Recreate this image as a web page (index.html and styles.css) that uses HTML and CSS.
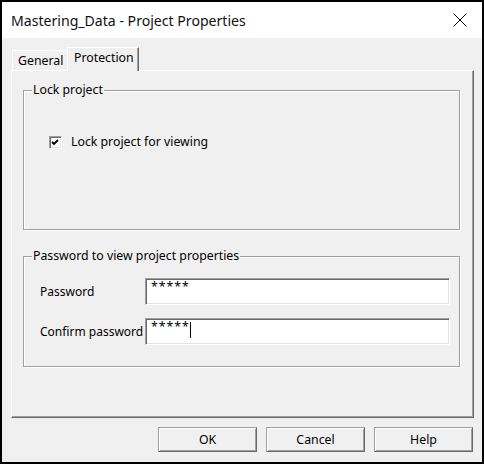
FILE: index.html
```html
<!DOCTYPE html>
<html>
<head>
<meta charset="utf-8">
<link rel="stylesheet" href="styles.css">
</head>
<body>
<div class="window">
  <div class="titlebar">
    <span class="title">Mastering_Data - Project Properties</span>
    <svg class="close" width="14" height="14" viewBox="0 0 14 14"><path d="M0.5 0.5 L13.5 13.5 M13.5 0.5 L0.5 13.5" stroke="#000" stroke-width="1" fill="none"/></svg>
  </div>
  <div class="client">
    <div class="tabs">
      <div class="tab">General</div>
      <div class="tab active">Protection</div>
    </div>
    <div class="panel">
      <div class="group group-lock">
        <span class="legend">Lock project</span>
        <label class="check"><span class="box"><svg width="11" height="11" viewBox="0 0 11 11"><polyline points="2,5 4,7 8,3" stroke="#000" stroke-width="1.8" fill="none"/></svg></span>Lock project for viewing</label>
      </div>
      <div class="group group-pass">
        <span class="legend">Password to view project properties</span>
        <div class="form">
          <span class="label">Password</span>
          <div class="field">*****</div>
          <span class="label">Confirm password</span>
          <div class="field">*****<span class="caret"></span></div>
        </div>
      </div>
    </div>
    <div class="buttons">
      <button class="btn">OK</button>
      <button class="btn">Cancel</button>
      <button class="btn">Help</button>
    </div>
  </div>
</div>
</body>
</html>
```
FILE: styles.css
```css
html, body { margin: 0; padding: 0; }
body {
  font-family: "Noto Sans", "Open Sans", sans-serif;
  font-size: 12.3px;
  color: #000;
  background: #fff;
}
.window {
  width: 484px;
  height: 464px;
  box-sizing: border-box;
  border: 2px solid #000;
  background: #f0f0f0;
  display: flex;
  flex-direction: column;
}
.titlebar {
  flex: none;
  height: 36px;
  background: #fff;
  display: flex;
  align-items: center;
  justify-content: space-between;
  padding: 0 15px 0 9px;
}
.title { font-size: 14.1px; color: #111; }
.close { display: block; }
.client {
  flex: 1;
  display: flex;
  flex-direction: column;
  padding: 9px 8px 0 9px;
}
.tabs {
  display: flex;
  align-items: flex-end;
  height: 24px;
  margin-bottom: -1px;
  padding-left: 1px;
  position: relative;
  z-index: 1;
}
.tab {
  box-sizing: border-box;
  height: 20px;
  width: 55px;
  margin-bottom: 1px;
  padding-left: 5px;
  line-height: 19px;
  white-space: nowrap;
  border-top: 1px solid #fff;
  border-left: 1px solid #fff;
}
.tab.active {
  height: 24px;
  width: 72px;
  margin-bottom: 0;
  padding-left: 6px;
  line-height: 20px;
  background: #f0f0f0;
  border-right: 1px solid #696969;
  box-shadow: inset -1px 0 0 #a0a0a0;
}
.panel {
  box-sizing: border-box;
  height: 348px;
  border-top: 1px solid #fff;
  border-left: 1px solid #fff;
  border-right: 1px solid #696969;
  border-bottom: 1px solid #696969;
  box-shadow: inset -1px -1px 0 #a0a0a0;
  padding: 19px 13px 0 11px;
}
.group {
  position: relative;
  box-sizing: border-box;
  border: 1px solid #a0a0a0;
  box-shadow: inset 1px 1px 0 #fff, 1px 1px 0 #fff;
}
.group-lock {
  height: 140px;
  padding: 43px 0 0 25px;
}
.group-pass {
  height: 111px;
  margin-top: 26px;
  padding: 21px 0 0 16px;
}
.legend {
  position: absolute;
  top: -9px;
  left: 8px;
  padding: 0 1px;
  line-height: 16px;
  white-space: nowrap;
  background: #f0f0f0;
}
.check {
  display: flex;
  align-items: center;
  gap: 9px;
  line-height: 14px;
  padding-top: 1px;
}
.box {
  box-sizing: border-box;
  width: 13px;
  height: 13px;
  background: #fff;
  border: 1px solid;
  border-color: #a0a0a0 #fff #fff #a0a0a0;
  box-shadow: inset 1px 1px 0 #696969, inset -1px -1px 0 #e3e3e3;
}
.box svg { display: block; }
.form {
  display: grid;
  grid-template-columns: 105px 305px;
  row-gap: 13px;
  align-items: center;
}
.label { white-space: nowrap; font-size: 12px; }
.field {
  box-sizing: border-box;
  height: 27px;
  background: #fff;
  border: 1px solid;
  border-color: #a0a0a0 #fff #fff #a0a0a0;
  box-shadow: inset 1px 1px 0 #696969, inset -1px -1px 0 #e3e3e3;
  padding: 1px 0 0 5px;
  line-height: 14px;
  letter-spacing: 1px;
}
.caret {
  display: inline-block;
  width: 1px;
  height: 16px;
  background: #000;
  vertical-align: top;
  margin-top: 2px;
}
.buttons {
  display: flex;
  justify-content: flex-end;
  gap: 9px;
  padding: 9px 1px 0 0;
}
.btn {
  box-sizing: border-box;
  width: 99px;
  height: 25px;
  margin: 0;
  padding: 0;
  font: inherit;
  color: #000;
  background: #f0f0f0;
  border: 1px solid;
  border-color: #a0a0a0 #696969 #696969 #a0a0a0;
  box-shadow: inset 1px 1px 0 #fff, inset -1px -1px 0 #a0a0a0;
}
```
